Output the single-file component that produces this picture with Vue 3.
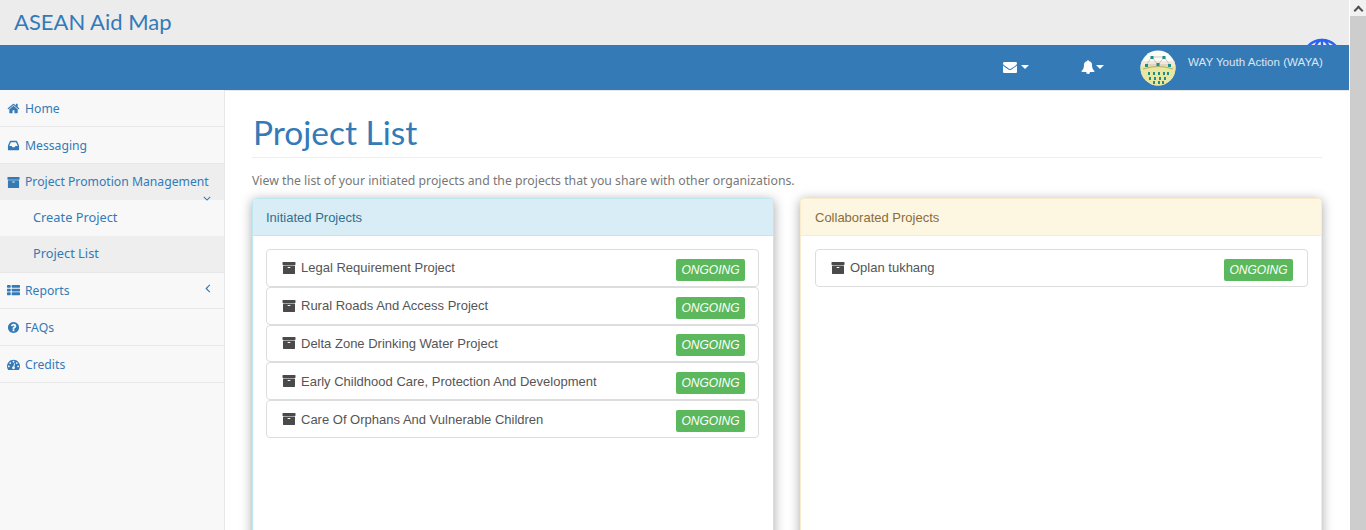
<script setup>
const ICON = {
  home: 'M1472 992v480q0 26-19 45t-45 19h-384v-384h-256v384h-384q-26 0-45-19t-19-45v-480q0-1 .5-3t.5-3l575-474 575 474q1 2 1 6zm223-69l-62 74q-8 9-21 11h-3q-13 0-21-7l-692-577-692 577q-12 8-24 7-13-2-21-11l-62-74q-8-10-7-23.5t11-21.5l719-599q32-26 76-26t76 26l244 204v-195q0-14 9-23t23-9h192q14 0 23 9t9 23v408l219 182q10 8 11 21.5t-7 23.5z',
  inbox: 'M1151 960h316q-1-3-2.5-8.5t-2.5-7.5l-212-496h-708l-212 496q-1 2-2.5 7.5t-2.5 8.5h316l95 192h320zm513 30v482q0 26-19 45t-45 19h-1408q-26 0-45-19t-19-45v-482q0-62 25-123l238-552q10-25 36.5-42t52.5-17h832q26 0 52.5 17t36.5 42l238 552q25 61 25 123z',
  archive: 'M1088 832q0-26-19-45t-45-19h-256q-26 0-45 19t-19 45 19 45 45 19h256q26 0 45-19t19-45zm576-192v960q0 26-19 45t-45 19h-1408q-26 0-45-19t-19-45v-960q0-26 19-45t45-19h1408q26 0 45 19t19 45zm64-448v256q0 26-19 45t-45 19h-1536q-26 0-45-19t-19-45v-256q0-26 19-45t45-19h1536q26 0 45 19t19 45z',
  list: 'M512 1248v192q0 40-28 68t-68 28h-320q-40 0-68-28t-28-68v-192q0-40 28-68t68-28h320q40 0 68 28t28 68zm0-512v192q0 40-28 68t-68 28h-320q-40 0-68-28t-28-68v-192q0-40 28-68t68-28h320q40 0 68 28t28 68zm1280 512v192q0 40-28 68t-68 28h-960q-40 0-68-28t-28-68v-192q0-40 28-68t68-28h960q40 0 68 28t28 68zm-1280-1024v192q0 40-28 68t-68 28h-320q-40 0-68-28t-28-68v-192q0-40 28-68t68-28h320q40 0 68 28t28 68zm1280 512v192q0 40-28 68t-68 28h-960q-40 0-68-28t-28-68v-192q0-40 28-68t68-28h960q40 0 68 28t28 68zm0-512v192q0 40-28 68t-68 28h-960q-40 0-68-28t-28-68v-192q0-40 28-68t68-28h960q40 0 68 28t28 68z',
  question: 'M1024 1376v-192q0-14-9-23t-23-9h-192q-14 0-23 9t-9 23v192q0 14 9 23t23 9h192q14 0 23-9t9-23zm256-672q0-88-55.5-163t-138.5-116-170-41q-243 0-371 213-15 24 8 42l132 100q7 6 19 6 16 0 25-12 53-68 86-92 34-24 86-24 48 0 85.5 26t37.5 59q0 38-20 61t-68 45q-63 28-115.5 86.5t-52.5 125.5v36q0 14 9 23t23 9h192q14 0 23-9t9-23q0-19 21.5-49.5t54.5-49.5q32-18 49-28.5t46-35 44.5-48 28-60.5 12.5-81zm384 192q0 209-103 385.5t-279.5 279.5-385.5 103-385.5-103-279.5-279.5-103-385.5 103-385.5 279.5-279.5 385.5-103 385.5 103 279.5 279.5 103 385.5z',
  gauge: 'M384 1152q0-53-37.5-90.5t-90.5-37.5-90.5 37.5-37.5 90.5 37.5 90.5 90.5 37.5 90.5-37.5 37.5-90.5zm192-448q0-53-37.5-90.5t-90.5-37.5-90.5 37.5-37.5 90.5 37.5 90.5 90.5 37.5 90.5-37.5 37.5-90.5zm428 481l101-382q6-26-7.5-48.5t-38.5-29.5-48 6.5-30 39.5l-101 382q-60 5-107 43.5t-63 98.5q-20 77 20 146t117 89 146-20 89-117q16-60-6-117t-72-91zm660-33q0-53-37.5-90.5t-90.5-37.5-90.5 37.5-37.5 90.5 37.5 90.5 90.5 37.5 90.5-37.5 37.5-90.5zm-640-640q0-53-37.5-90.5t-90.5-37.5-90.5 37.5-37.5 90.5 37.5 90.5 90.5 37.5 90.5-37.5 37.5-90.5zm448 192q0-53-37.5-90.5t-90.5-37.5-90.5 37.5-37.5 90.5 37.5 90.5 90.5 37.5 90.5-37.5 37.5-90.5zm320 448q0 261-141 483-19 29-54 29h-1402q-35 0-54-29-141-221-141-483 0-182 71-348t191-286 286-191 348-71 348 71 286 191 191 286 71 348z',
  envelope: 'M1792 710v794q0 66-47 113t-113 47h-1472q-66 0-113-47t-47-113v-794q44 49 101 87 362 246 497 345 57 42 92.5 65.5t94.5 48 110 24.5h2q51 0 110-24.5t94.5-48 92.5-65.5q170-123 498-345 57-39 100-87zm0-294q0 79-49 151t-122 123q-376 261-468 325-10 7-42.5 30.5t-54 38-52 32.5-57.5 27-50 9h-2q-23 0-50-9t-57.5-27-52-32.5-54-38-42.5-30.5q-91-64-262-182.5t-205-142.5q-62-42-117-115.5t-55-136.5q0-78 41.5-130t118.5-52h1472q65 0 112.5 47t47.5 113z',
  bell: 'M912 1696q0-16-16-16-59 0-101.5-42.5t-42.5-101.5q0-16-16-16t-16 16q0 73 51.5 124.5t124.5 51.5q16 0 16-16zm816-288q0 52-38 90t-90 38h-448q0 106-75 181t-181 75-181-75-75-181h-448q-52 0-90-38t-38-90q50-42 91-88t85-119.5 74.5-158.5 50-206 19.5-260q0-152 117-282.5t307-158.5q-8-19-8-39 0-40 28-68t68-28 68 28 28 68q0 20-8 39 190 28 307 158.5t117 282.5q0 139 19.5 260t50 206 74.5 158.5 85 119.5 91 88z'
}

const menu = [
  { label: 'Home', icon: 'home' },
  { label: 'Messaging', icon: 'inbox' },
  { label: 'Project Promotion Management', icon: 'archive', open: true, children: [
    { label: 'Create Project' },
    { label: 'Project List', active: true }
  ] },
  { label: 'Reports', icon: 'list', closed: true },
  { label: 'FAQs', icon: 'question' },
  { label: 'Credits', icon: 'gauge' }
]

const panels = [
  { title: 'Initiated Projects', kind: 'info', items: [
    'Legal Requirement Project',
    'Rural Roads And Access Project',
    'Delta Zone Drinking Water Project',
    'Early Childhood Care, Protection And Development',
    'Care Of Orphans And Vulnerable Children'
  ] },
  { title: 'Collaborated Projects', kind: 'warning', items: ['Oplan tukhang'] }
]

// little windows of the building in the avatar
const windows = []
for (const [y, xs] of [[22, [8, 13, 18, 23, 27]], [27, [9, 14, 19, 24]], [31, [13, 18, 22]]]) {
  for (const x of xs) windows.push({ x, y })
}
</script>

<template>
  <div class="screen">
    <div class="page">
      <header class="brand">
        <span class="brand-name">ASEAN Aid Map</span>
        <svg class="globe" viewBox="0 0 60 60" width="60" height="60">
          <g fill="none" stroke="#2b63f0" stroke-width="2.4">
            <circle cx="30" cy="22" r="19" />
            <ellipse cx="30" cy="22" rx="9" ry="19" />
            <path d="M30 3v38M15 9q15 5 30 0" />
          </g>
        </svg>
      </header>

      <nav class="topnav">
        <span class="nav-btn mail">
          <svg class="ico" viewBox="0 0 1792 1792"><path :d="ICON.envelope" /></svg>
          <i class="caret"></i>
        </span>
        <span class="nav-btn bell">
          <svg class="ico" viewBox="0 0 1792 1792"><path :d="ICON.bell" /></svg>
          <i class="caret"></i>
        </span>
        <svg class="avatar" viewBox="0 0 36 36" width="36" height="36">
          <defs><clipPath id="round"><circle cx="18" cy="18" r="17.5" /></clipPath></defs>
          <g clip-path="url(#round)">
            <rect width="36" height="36" fill="#fdfdf8" />
            <rect y="11" width="36" height="5" fill="#f3e6da" />
            <rect y="16" width="36" height="20" fill="#e9e6a0" />
            <path d="M12 7 24 7 30 15 6 15 12 7 18 15 24 7" fill="none" stroke="#b9b3a0" stroke-width="0.7" />
            <path d="M3 19q15-5 30 0" fill="none" stroke="#a39a62" stroke-width="0.8" />
            <g fill="#1f8f86">
              <rect x="10.5" y="6" width="3" height="3" />
              <rect x="22.5" y="6" width="3" height="3" />
              <rect x="5" y="14" width="3" height="3" />
              <rect x="16.5" y="13" width="3" height="3" />
              <rect x="28" y="14" width="3" height="3" />
              <rect v-for="w in windows" :key="w.x + '-' + w.y" :x="w.x" :y="w.y" width="2" height="3" />
            </g>
          </g>
        </svg>
        <span class="org">WAY Youth Action (WAYA)</span>
      </nav>

      <div class="body">
        <aside class="sidebar">
          <template v-for="m in menu" :key="m.label">
            <div class="menu-item" :class="{ open: m.open, short: m.closed }">
              <svg class="ico" viewBox="0 0 1792 1792"><path :d="ICON[m.icon]" /></svg>
              <span>{{ m.label }}</span>
              <svg v-if="m.open" class="arrow down" viewBox="0 0 10 6"><path d="M1 1l4 4 4-4" /></svg>
              <svg v-if="m.closed" class="arrow left" viewBox="0 0 6 10"><path d="M5 1 1 5l4 4" /></svg>
            </div>
            <div
              v-for="c in m.children"
              :key="c.label"
              class="sub-item"
              :class="{ active: c.active }"
            >{{ c.label }}</div>
          </template>
        </aside>

        <main class="content">
          <h1>Project List</h1>
          <p class="lead">View the list of your initiated projects and the projects that you share with other organizations.</p>
          <div class="panels">
            <section v-for="p in panels" :key="p.title" class="panel" :class="p.kind">
              <div class="panel-head">{{ p.title }}</div>
              <div class="panel-body">
                <div v-for="item in p.items" :key="item" class="row">
                  <svg class="ico box" viewBox="0 0 1792 1792"><path :d="ICON.archive" /></svg>
                  <span class="row-name">{{ item }}</span>
                  <span class="badge">ONGOING</span>
                </div>
              </div>
            </section>
          </div>
        </main>
      </div>
    </div>

    <div class="scrollbar">
      <div class="scroll-btn"><i></i></div>
      <div class="scroll-thumb"></div>
    </div>
  </div>
</template>

<style>
html, body { margin: 0; height: 530px; overflow: hidden; }
</style>

<style scoped>
.screen { display: flex; height: 530px; overflow: hidden; background: #fff; font-family: "Noto Sans", sans-serif; }
.page { flex: 1; min-width: 0; display: flex; flex-direction: column; }

.brand { position: relative; height: 45px; flex: none; background: #ececec; overflow: hidden; padding-left: 14px; }
.brand-name { font-family: Lato, sans-serif; font-size: 22px; line-height: 44px; color: #337ab7; }
.globe { position: absolute; left: 1292px; top: 37px; }

.topnav { height: 45px; flex: none; background: #337ab7; display: flex; align-items: center; color: #fff; }
.nav-btn { display: flex; align-items: center; gap: 4px; margin-top: -1px; }
.nav-btn .ico { width: 14px; height: 14px; fill: #fff; }
.mail { margin-left: 1003px; }
.bell { margin-left: 52px; gap: 1px; }
.caret { width: 0; height: 0; border-left: 4px solid transparent; border-right: 4px solid transparent; border-top: 4px solid #fff; }
.avatar { margin-left: 36px; flex: none; }
.org { font-family: "Liberation Sans", sans-serif; font-size: 11.6px; color: #dbe6f1; margin-left: 12px; margin-top: -13px; }

.body { flex: 1; min-height: 0; display: flex; }
.sidebar { width: 224px; flex: none; background: #f8f8f8; border-right: 1px solid #e7e7e7; font-size: 12.2px; color: #337ab7; }
.menu-item { position: relative; height: 36px; display: flex; align-items: center; gap: 5px; padding-left: 7px; border-bottom: 1px solid #e7e7e7; }
.menu-item .ico { width: 13px; height: 13px; fill: #337ab7; flex: none; }
.menu-item.open { background: #eee; border-bottom: 0; }
.menu-item.open span { margin-top: -2px; }
.menu-item.short { height: 35px; }
.arrow { position: absolute; fill: none; stroke: #337ab7; stroke-width: 1.3; }
.down { width: 8px; height: 5px; left: 203px; top: 32px; }
.left { width: 6px; height: 9px; left: 205px; top: 11px; }
.sub-item { height: 36px; line-height: 35px; padding-left: 33px; font-size: 12.8px; }
.sub-item.active { background: #eee; border-bottom: 1px solid #e7e7e7; }

.content { flex: 1; min-width: 0; padding: 0 27px; overflow: hidden; border-top: 1px solid #e7e7e7; }
h1 { margin: 20px 0 0; height: 46px; border-bottom: 1px solid #eee; font-family: Lato, sans-serif; font-size: 33.5px; font-weight: 400; line-height: 42px; color: #337ab7; padding-left: 1px; }
.lead { margin: 14px 0 0; font-size: 12.25px; line-height: 18px; color: #777; }
.panels { display: grid; grid-template-columns: 1fr 1fr; gap: 26px; margin-top: 8px; }
.panel { height: 400px; border: 1px solid; border-radius: 4px; background: #fff; box-shadow: 0 2px 12px rgba(0, 0, 0, 0.35); }
.panel-head { height: 36px; line-height: 38px; padding: 0 13px; border-bottom: 1px solid; border-radius: 3px 3px 0 0; font-family: "Liberation Sans", sans-serif; font-size: 13px; }
.info { border-color: #bce8f1; }
.info .panel-head { background: #d9edf7; color: #31708f; border-color: #bce8f1; }
.info .panel-body { padding: 13px 14px 13px 13px; }
.warning { border-color: #faebcc; }
.warning .panel-head { background: #fdf6e1; color: #8a6d3b; border-color: #faebcc; padding-left: 14px; }
.warning .panel-body { padding: 13px 13px 13px 14px; }
.warning .row { padding-right: 14px; }
.row { box-sizing: border-box; height: 37.8px; display: flex; align-items: center; padding: 0 13px 0 15px; border: 1px solid #ddd; border-radius: 4px; font-family: "Liberation Sans", sans-serif; font-size: 13px; color: #555; }
.box { width: 14px; height: 14px; fill: #4a4a4a; flex: none; margin-right: 5px; }
.row-name { flex: 1; }
.badge { width: 69px; height: 22px; line-height: 22px; text-align: center; background: #5cb85c; border-radius: 2px; color: #fff; font-style: italic; font-size: 12px; margin-top: 4px; }

.scrollbar { width: 17px; flex: none; box-sizing: border-box; border-left: 1px solid #fff; background: #f1f1f1; display: flex; flex-direction: column; }
.scroll-btn { height: 16px; display: flex; align-items: center; justify-content: center; }
.scroll-btn i { width: 5px; height: 5px; border-left: 2px solid #505050; border-top: 2px solid #505050; transform: rotate(45deg); margin-top: 4px; }
.scroll-thumb { flex: 1; background: #cdcdcd; }
</style>
